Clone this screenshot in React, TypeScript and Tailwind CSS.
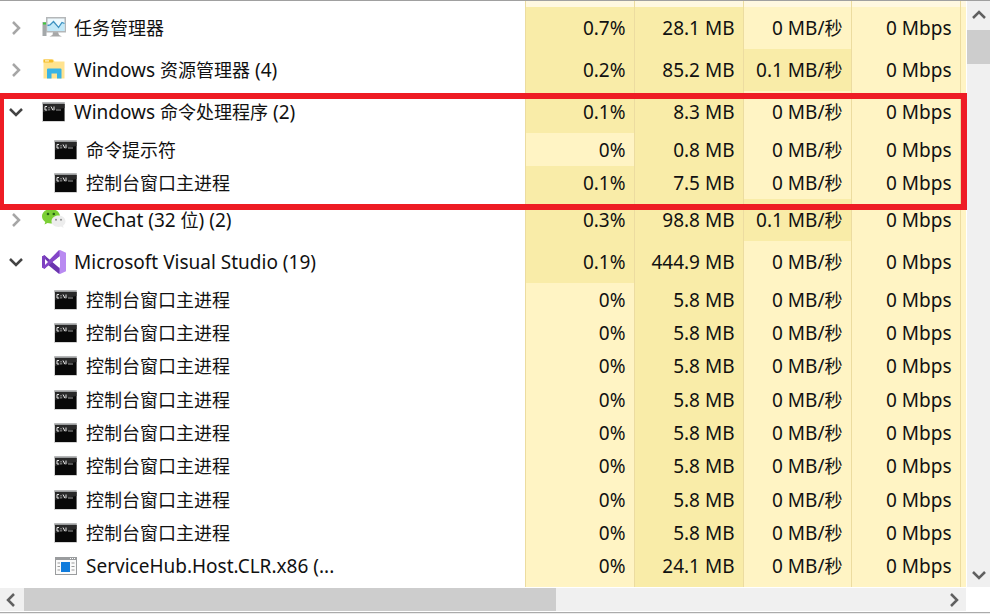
import { useState } from "react";

type Kind = "taskmgr" | "explorer" | "console" | "wechat" | "vs" | "app";

interface Process {
  name: string;
  icon: Kind;
  cpu: string;
  memory: string;
  disk: string;
  network: string;
}

interface Group extends Process {
  expanded: boolean;
  children: Process[];
}

const consoleHost = (name: string, cpu: string, memory: string): Process => ({
  name,
  icon: "console",
  cpu,
  memory,
  disk: "0 MB/秒",
  network: "0 Mbps",
});

const GROUPS: Group[] = [
  { name: "任务管理器", icon: "taskmgr", cpu: "0.7%", memory: "28.1 MB", disk: "0 MB/秒", network: "0 Mbps", expanded: false, children: [] },
  { name: "Windows 资源管理器 (4)", icon: "explorer", cpu: "0.2%", memory: "85.2 MB", disk: "0.1 MB/秒", network: "0 Mbps", expanded: false, children: [] },
  {
    name: "Windows 命令处理程序 (2)",
    icon: "console",
    cpu: "0.1%",
    memory: "8.3 MB",
    disk: "0 MB/秒",
    network: "0 Mbps",
    expanded: true,
    children: [consoleHost("命令提示符", "0%", "0.8 MB"), consoleHost("控制台窗口主进程", "0.1%", "7.5 MB")],
  },
  { name: "WeChat (32 位) (2)", icon: "wechat", cpu: "0.3%", memory: "98.8 MB", disk: "0.1 MB/秒", network: "0 Mbps", expanded: false, children: [] },
  {
    name: "Microsoft Visual Studio (19)",
    icon: "vs",
    cpu: "0.1%",
    memory: "444.9 MB",
    disk: "0 MB/秒",
    network: "0 Mbps",
    expanded: true,
    children: [
      ...Array.from({ length: 8 }, () => consoleHost("控制台窗口主进程", "0%", "5.8 MB")),
      { name: "ServiceHub.Host.CLR.x86 (...", icon: "app", cpu: "0%", memory: "24.1 MB", disk: "0 MB/秒", network: "0 Mbps" },
    ],
  },
];

function ProcessIcon({ kind }: { kind: Kind }) {
  const props = { viewBox: "0 0 24 24", className: "size-6 shrink-0", "aria-hidden": true };
  switch (kind) {
    case "taskmgr":
      return (
        <svg {...props}>
          <rect x="0.5" y="6" width="4" height="14" fill="#a4a8aa" />
          <rect x="1" y="6.5" width="3" height="2" fill="#3fc93c" />
          <path d="M11 16h5l1 3 3 1.5H7.5l3-1.5z" fill="#a7a7a7" />
          <rect x="4" y="1" width="20" height="15.5" fill="#b4b7b9" />
          <rect x="5.5" y="2.5" width="17" height="12.5" fill="#eef9fe" />
          <path d="M5.5 10l3-1 3-3 4 6 4-6 3 1v8h-17z" fill="#c2e8f8" />
          <path d="M5.5 9.500l2.5-.5 3.5-3.5 5 6 3.5-5 2.5 1" fill="none" stroke="#3c91c1" strokeWidth="1.3" />
        </svg>
      );
    case "explorer":
      return (
        <svg {...props}>
          <path d="M1.5 1.5h10l1 2H22.5v17H1.5z" fill="#ffe38f" />
          <path d="M1.5 1.5h9l1 2-1 1H1.5z" fill="#f5bd28" />
          <rect x="3" y="2.3" width="4" height="1.2" fill="#fff6d5" />
          <path d="M5 20.5V11.5q0-1 1-1h12.5q1 0 1 1v9h-4.5v-5h-5.5v5z" fill="#38b3e5" />
        </svg>
      );
    case "console":
      return (
        <svg {...props}>
          <rect x="0" y="2" width="23" height="20" fill="#d5d5d5" />
          <rect x="0.5" y="2.5" width="22" height="2" fill="#9a9c9d" />
          <rect x="1" y="4" width="21.5" height="17" fill="#080808" />
          <path d="M1 4h21.5v4L1 12z" fill="#292929" />
          <path d="M5 6.5H3v3.500h2M7 7.300v1M7 9.300v1M9 6.500l2 3.800M12 6.500v3.800" fill="none" stroke="#e5e5e5" strokeWidth="1" />
          <path d="M14 10h5" stroke="#9c9c9c" strokeWidth="1" />
        </svg>
      );
    case "wechat":
      return (
        <svg {...props}>
          <path d="M9 1C4 1 0 4.200 0 8.300c0 2.400 1.300 4.200 3.300 5.600l-.8 2.500 3-1.500c1.100.3 2.200.5 3.500.5 5 0 9-3.200 9-7.200S14 1 9 1z" fill="#7bcf35" />
          <circle cx="6" cy="6" r="1.3" fill="#286215" />
          <circle cx="11.800" cy="6" r="1.3" fill="#286215" />
          <path d="M16.500 7.500c-4 0-7 2.600-7 5.800s3 5.700 7 5.700c.9 0 1.800-.1 2.600-.4l2.500 1.300-.6-2.200c1.600-1.100 2.500-2.600 2.500-4.400 0-3.200-3-5.800-7-5.800z" fill="#ededed" />
          <circle cx="14" cy="11.800" r="1" fill="#8c8c8c" />
          <circle cx="19" cy="11.800" r="1" fill="#8c8c8c" />
        </svg>
      );
    case "vs":
      return (
        <svg {...props}>
          <path d="M0 6.500L2.500 5.300 18 18.500V24L16.500 23.500 2.500 12z" fill="#6b35ae" />
          <path d="M0 6.500L2.500 5.300 4 6.500V17.500L2.500 18.700 0 17.500z" fill="#7c40bf" />
          <path d="M2.500 18.700L0 17.500 16.500.5 18 0v6z" fill="#8446c8" />
          <path d="M16.500.5L18 0l6 2.700v18.600L18 24l-1.500-.5 1-.9V1.500z" fill="#b98af1" />
          <path d="M18 6.500v11L11 12z" fill="#fff" />
          <path d="M3 9v6L6 12z" fill="#fff" />
        </svg>
      );
    case "app":
      return (
        <svg {...props}>
          <rect x="1" y="3" width="22" height="18" fill="#9a9c9e" />
          <rect x="2" y="6" width="20" height="14" fill="#fafafa" />
          <path d="M16 4.5h1M18 4.5h1M20 4.5h1" stroke="#fff" />
          <rect x="7" y="8" width="9" height="10" fill="#0f7bdc" />
          <path d="M3.500 9h2.500M3.500 12.500h2.500M3.500 16h2.500M17.500 9h3M17.500 12.500h3M17.500 16h3" stroke="#9b9b9b" />
        </svg>
      );
  }
}

const CHEVRONS = {
  up: "M2 10l6-6 6 6",
  down: "M2 5l6 6 6-6",
  left: "M10 2L4 8l6 6",
  right: "M5 2l6 6-6 6",
};

function Chevron({ direction }: { direction: keyof typeof CHEVRONS }) {
  return (
    <svg viewBox="0 0 16 16" className="size-4" fill="none" stroke="currentColor" strokeWidth="2.5" aria-hidden>
      <path d={CHEVRONS[direction]} />
    </svg>
  );
}

/* Han characters are set one pixel smaller than the Latin text beside them. */
function Label({ text }: { text: string }) {
  return (
    <>
      {text.split(/([\u4e00-\u9fff]+)/).map((run, i) =>
        i % 2 === 1 ? (
          <span key={i} className="text-[18px]">
            {run}
          </span>
        ) : (
          run
        ),
      )}
    </>
  );
}

const PALE = "bg-[#fff8e1]";
const LIGHT = "bg-[#fff4c4]";
const WARM = "bg-[#f9eca8]";
const CELL = "border-l border-[#ecdca0] p-0 pr-2 text-right whitespace-nowrap";

function Usage({ process }: { process: Process }) {
  return (
    <>
      <td className={`${CELL} ${process.cpu === "0%" ? LIGHT : WARM}`}>{process.cpu}</td>
      <td className={`${CELL} ${WARM}`}>{process.memory}</td>
      <td className={`${CELL} ${process.disk.startsWith("0 ") ? LIGHT : WARM}`}>
        <Label text={process.disk} />
      </td>
      <td className={`${CELL} ${LIGHT}`}>{process.network}</td>
      <td className={`border-l border-[#ecdca0] p-0 ${LIGHT}`} />
    </>
  );
}

function GroupRows({ group }: { group: Group }) {
  const [open, setOpen] = useState(group.expanded);
  return (
    <tbody>
      <tr className="h-[42px]">
        <th scope="row" className="p-0 text-left font-normal">
          <div className="flex items-center">
            <button
              type="button"
              aria-label={group.name}
              aria-expanded={open}
              onClick={() => setOpen(!open)}
              className={`flex w-[42px] shrink-0 pl-2 ${open ? "text-[#444]" : "text-[#a6a6a6]"}`}
            >
              <Chevron direction={open ? "down" : "right"} />
            </button>
            <ProcessIcon kind={group.icon} />
            <span className="pl-2 whitespace-nowrap">
              <Label text={group.name} />
            </span>
          </div>
        </th>
        <Usage process={group} />
      </tr>
      {open &&
        group.children.map((child, i) => (
          <tr key={i} className="h-[33px] nth-[3n+1]:h-[34px]">
            <th scope="row" className="p-0 text-left font-normal">
              <div className="flex items-center pl-[54px]">
                <ProcessIcon kind={child.icon} />
                <span className="pl-2 whitespace-nowrap">
                  <Label text={child.name} />
                </span>
              </div>
            </th>
            <Usage process={child} />
          </tr>
        ))}
    </tbody>
  );
}

function BlankRow({ className, fills }: { className: string; fills: string[] }) {
  return (
    <tbody aria-hidden>
      <tr className={className}>
        <td className="p-0" />
        {fills.map((fill, i) => (
          <td key={i} className={`border-l border-[#ecdca0] p-0 ${fill}`} />
        ))}
      </tr>
    </tbody>
  );
}

export default function App() {
  return (
    <div className="flex h-screen flex-col overflow-hidden border-t border-[#a0a0a0] bg-white font-['Noto_Sans','Noto_Sans_CJK_SC',sans-serif] text-[19px] leading-6 text-[#111]">
      <div className="flex min-h-0 flex-1 gap-px">
        <main className="relative min-w-0 flex-1">
          <div className="h-full overflow-hidden">
            <table className="w-full table-fixed border-collapse">
              <colgroup>
                <col />
                <col className="w-[109px]" />
                <col className="w-[109px]" />
                <col className="w-[108px]" />
                <col className="w-[109px]" />
                <col className="w-[6px]" />
              </colgroup>
              <BlankRow className="h-[6px]" fills={[PALE, PALE, PALE, PALE, PALE]} />
              {GROUPS.map((group) => (
                <GroupRows key={group.name} group={group} />
              ))}
              <BlankRow className="h-8" fills={[LIGHT, WARM, LIGHT, LIGHT, LIGHT]} />
            </table>
          </div>
          <div className="pointer-events-none absolute top-[92px] -right-px left-0 h-[117px] border-6 border-l-4 border-[#ee1c24]" />
        </main>
        <div className="flex w-[23px] flex-col bg-[#f0f0f0] text-[#606060]">
          <button type="button" aria-label="向上滚动" className="flex h-[29px] items-center justify-center">
            <Chevron direction="up" />
          </button>
          <div className="flex-1">
            <div className="h-[34px] bg-[#cdcdcd]" />
          </div>
          <button type="button" aria-label="向下滚动" className="flex h-6 items-center justify-center">
            <Chevron direction="down" />
          </button>
        </div>
      </div>
      <div className="mt-px mr-6 flex h-[23px] bg-[#f0f0f0] text-[#606060]">
        <button type="button" aria-label="向左滚动" className="flex w-6 items-center justify-center">
          <Chevron direction="left" />
        </button>
        <div className="flex-1">
          <div className="h-full w-[58%] bg-[#cdcdcd]" />
        </div>
        <button type="button" aria-label="向右滚动" className="flex w-6 items-center justify-center">
          <Chevron direction="right" />
        </button>
      </div>
      <div className="mt-px h-[2px] border-t border-[#ababab] bg-[#ececec]" />
    </div>
  );
}
